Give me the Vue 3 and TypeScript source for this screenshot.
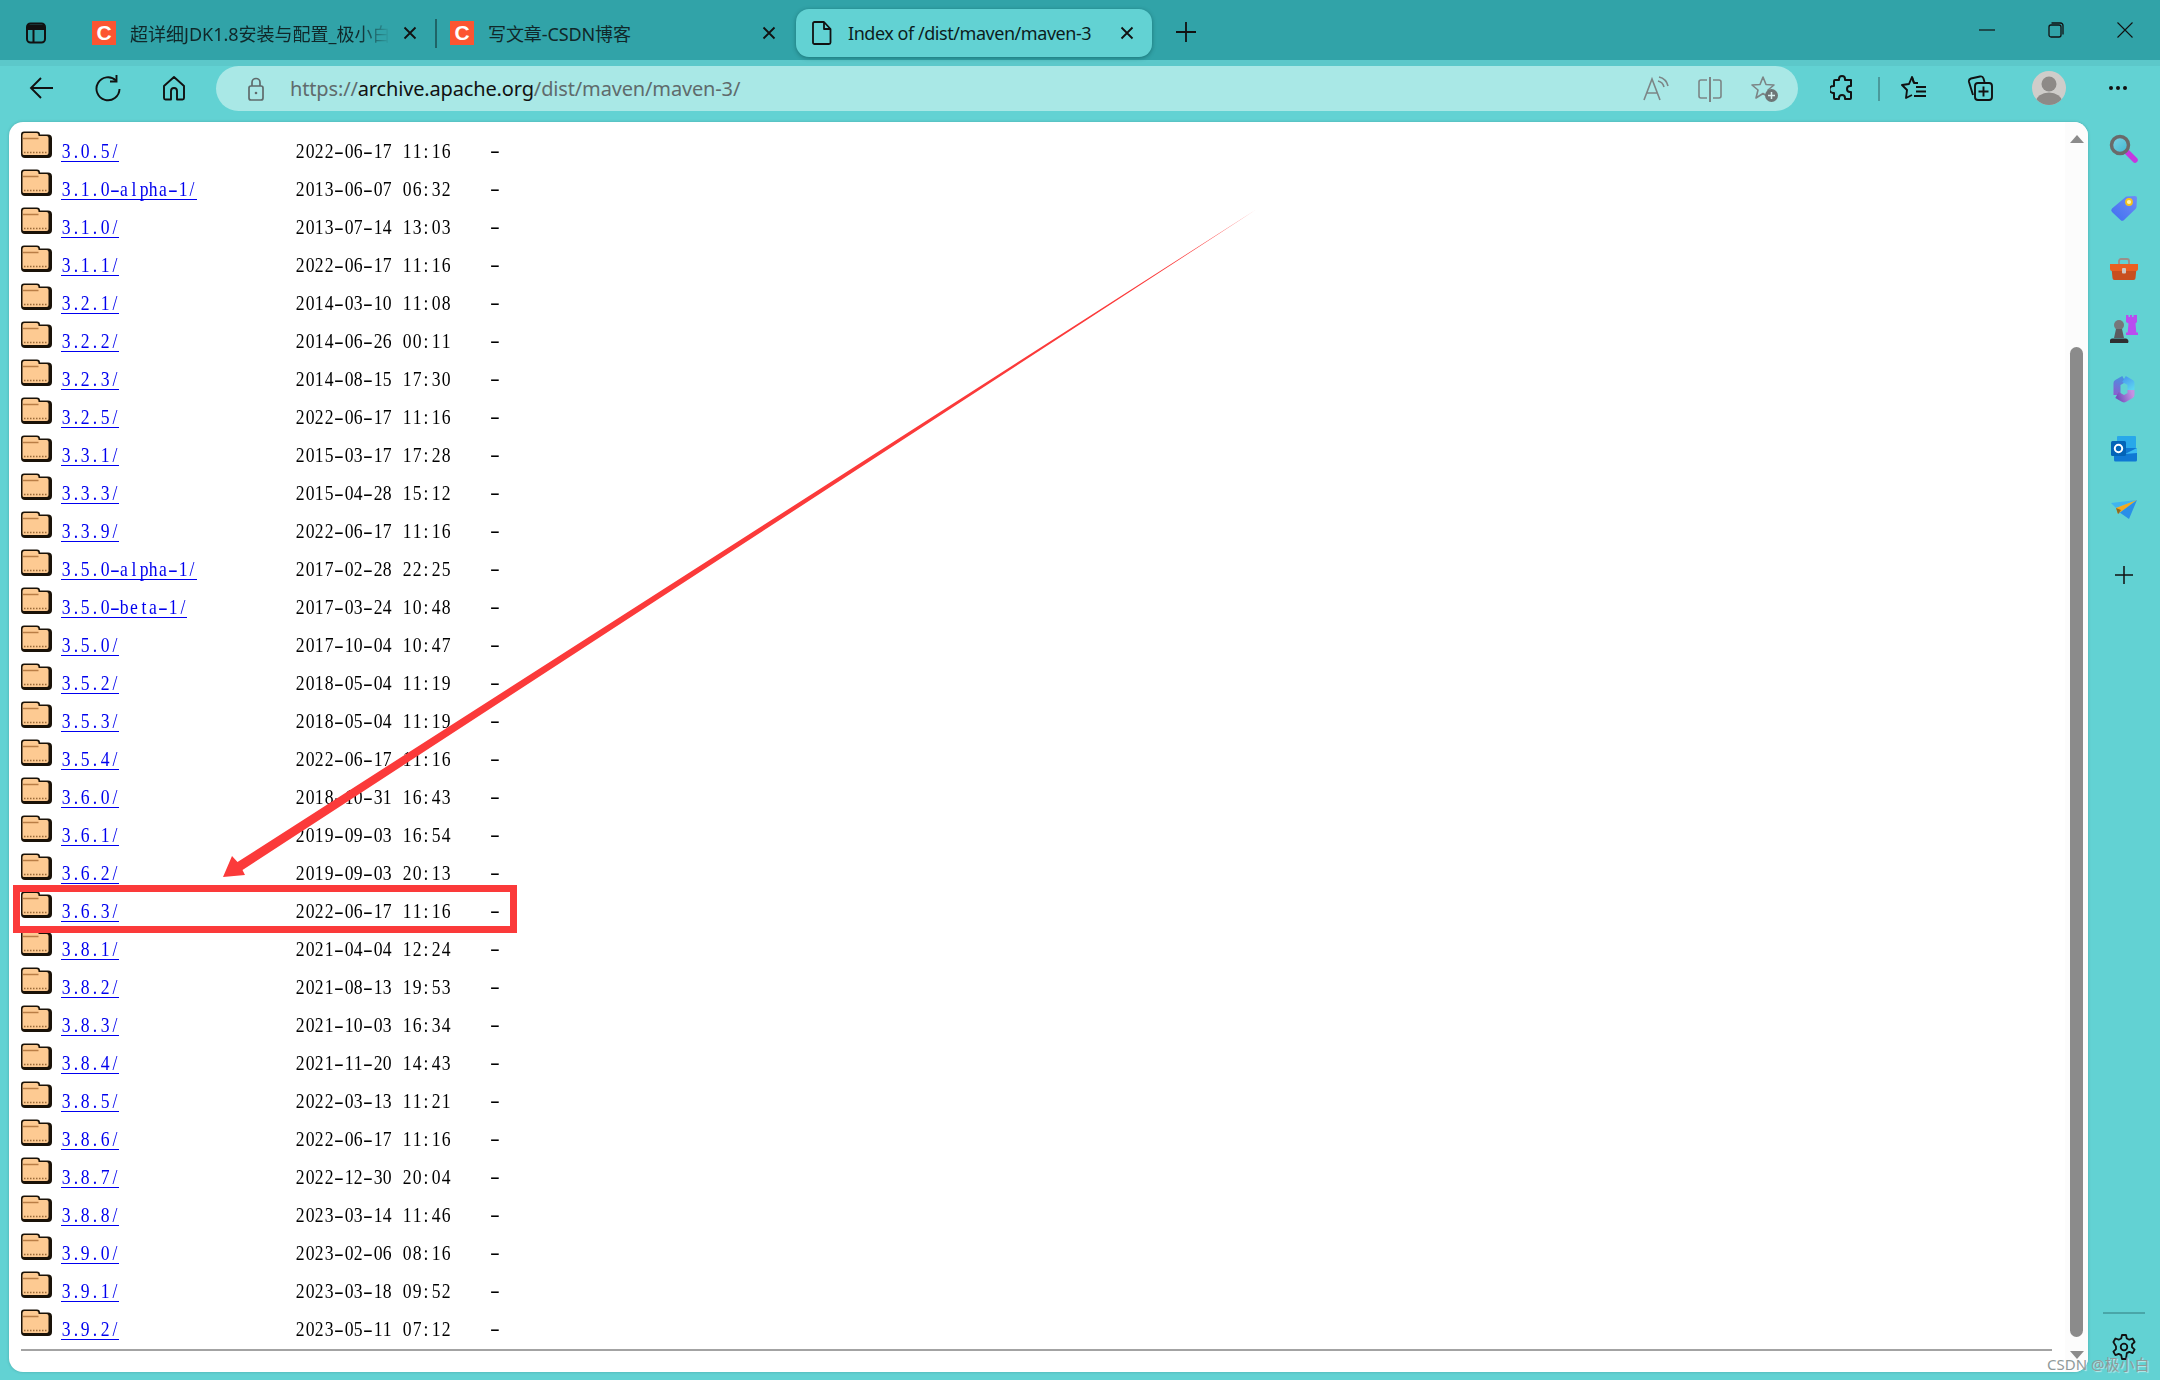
<template>
  <div class="browser">
    <!-- tab strip -->
    <header class="tabstrip">
      <button class="strip-btn">
        <svg width="24" height="24" viewBox="0 0 24 24" fill="none" stroke="#111" stroke-width="2">
          <rect x="3" y="2.5" width="18" height="19" rx="3.5" />
          <path d="M3 8h18M9.500 8v13.500" />
          <path d="M4 3.500h16v4.500H4z" fill="#111" stroke="none" />
        </svg>
      </button>
      <div class="tab tab-first">
        <span class="favicon">C</span>
        <span class="tab-title fade">超详细JDK1.8安装与配置_极小白</span>
        <svg class="tab-x" width="16" height="16" viewBox="0 0 16 16"><path d="M2.500 2.500l11 11M13.500 2.500l-11 11" stroke="#111" stroke-width="1.800" /></svg>
      </div>
      <span class="tab-sep"></span>
      <div class="tab tab-second">
        <span class="favicon">C</span>
        <span class="tab-title">写文章-CSDN博客</span>
        <svg class="tab-x" width="16" height="16" viewBox="0 0 16 16"><path d="M2.500 2.500l11 11M13.500 2.500l-11 11" stroke="#111" stroke-width="1.800" /></svg>
      </div>
      <div class="tab tab-active">
        <svg class="file-icon" width="20" height="24" viewBox="0 0 20 24" fill="none" stroke="#111" stroke-width="1.800" stroke-linejoin="round">
          <path d="M2.500 1h9.500l6.500 7v13.500a1.500 1.500 0 0 1-1.500 1.500H2.500A1.500 1.500 0 0 1 1 21.500v-19A1.500 1.500 0 0 1 2.500 1z" />
          <path d="M12 1v7h6.500" />
        </svg>
        <span class="tab-title">Index of /dist/maven/maven-3</span>
        <svg class="tab-x" width="16" height="16" viewBox="0 0 16 16"><path d="M2.500 2.500l11 11M13.500 2.500l-11 11" stroke="#111" stroke-width="1.800" /></svg>
      </div>
      <button class="strip-btn new-tab">
        <svg width="24" height="24" viewBox="0 0 24 24"><path d="M12 2v20M2 12h20" stroke="#111" stroke-width="1.800" /></svg>
      </button>
      <div class="win-controls">
        <svg width="16" height="16" viewBox="0 0 16 16"><path d="M0 8h16" stroke="#111" stroke-width="1.200" /></svg>
        <svg width="16" height="16" viewBox="0 0 16 16" fill="none" stroke="#111" stroke-width="1.300">
          <rect x="1" y="3" width="12" height="12" rx="2" />
          <path d="M3.500 1h9a2.500 2.500 0 0 1 2.500 2.500v9" />
        </svg>
        <svg width="16" height="16" viewBox="0 0 16 16"><path d="M0.500 0.500l15 15M15.500 0.500l-15 15" stroke="#111" stroke-width="1.100" /></svg>
      </div>
    </header>

    <!-- toolbar -->
    <nav class="toolbar">
      <button class="tool">
        <svg width="26" height="26" viewBox="0 0 26 26" fill="none" stroke="#111" stroke-width="1.900"><path d="M24 13H2M12 3L2 13l10 10" /></svg>
      </button>
      <button class="tool">
        <svg width="26" height="28" viewBox="0 0 26 28" fill="none" stroke="#111" stroke-width="1.900"><path d="M21 6.500A11.500 11.500 0 1 0 24.500 15" /><path d="M21.500 1v6.500H15" /></svg>
      </button>
      <button class="tool">
        <svg width="24" height="26" viewBox="0 0 24 26" fill="none" stroke="#111" stroke-width="1.900" stroke-linejoin="round"><path d="M12 2L2 11v12a1.500 1.500 0 0 0 1.500 1.500H9V16a3 3 0 0 1 6 0v8.500h5.500A1.500 1.500 0 0 0 22 23V11z" /></svg>
      </button>
      <div class="addressbar">
        <svg class="lock" width="16" height="24" viewBox="0 0 16 24" fill="none" stroke="#5f6b6c" stroke-width="1.700">
          <rect x="1" y="9" width="14" height="14" rx="2" />
          <path d="M4 9V5.500a4 4 0 0 1 8 0V9" />
          <circle cx="8" cy="16" r="1.300" fill="#5f6b6c" stroke="none" />
        </svg>
        <span class="url"><span class="url-dim">https://</span>archive.apache.org<span class="url-dim">/dist/maven/maven-3/</span></span>
        <div class="addr-icons">
          <svg width="26" height="26" viewBox="0 0 26 26" fill="none" stroke="#7c8586" stroke-width="1.600">
            <path d="M1 24L9 3l8 21M4 17h10" />
            <path d="M15 5a8 8 0 0 1 6 6M16 1a12 12 0 0 1 9 9" />
          </svg>
          <svg width="26" height="26" viewBox="0 0 26 26" fill="none" stroke="#7c8586" stroke-width="1.600">
            <path d="M10 4H4a2 2 0 0 0-2 2v14a2 2 0 0 0 2 2h6M16 4h6a2 2 0 0 1 2 2v14a2 2 0 0 1-2 2h-6" />
            <path d="M13 1v25" stroke-width="2" />
          </svg>
          <svg width="28" height="28" viewBox="0 0 28 28" fill="none" stroke="#7c8586" stroke-width="1.600" stroke-linejoin="round">
            <path d="M12 2l3 7.500 8 .5-6 5 2 8-7-4.500L5 23l2-8-6-5 8-.5z" />
            <circle cx="20.500" cy="20.500" r="6.500" fill="#6d7576" stroke="none" />
            <path d="M20.500 17v7M17 20.500h7" stroke="#d8f0ef" stroke-width="1.500" />
          </svg>
        </div>
      </div>
      <button class="tool tool-ext">
        <svg width="24" height="26" viewBox="0 0 24 26" fill="none" stroke="#111" stroke-width="2" stroke-linejoin="round">
          <path d="M9 5V4a3 3 0 0 1 6 0v1h6v6h-1a3 3 0 0 0 0 6h1v6a1 1 0 0 1-1 1h-5v-1a3 3 0 0 0-6 0v1H5a1 1 0 0 1-1-1v-5H3a3.500 3.500 0 0 1 0-7h1V6a1 1 0 0 1 1-1z" />
        </svg>
      </button>
      <span class="tool-sep"></span>
      <button class="tool tool-fav">
        <svg width="26" height="26" viewBox="0 0 26 26" fill="none" stroke="#111" stroke-width="1.900" stroke-linejoin="round">
          <path d="M13 8l-2-6-3 7-7 1 5 5-1 8 6-3" />
          <path d="M11 2l2 6h4M15 12h10M15 16.500h10M13 21h12" />
        </svg>
      </button>
      <button class="tool">
        <svg width="26" height="26" viewBox="0 0 26 26" fill="none" stroke="#111" stroke-width="1.900" stroke-linejoin="round">
          <path d="M6 20L2 7a3 3 0 0 1 2-3.500L13 1.500a3 3 0 0 1 3.500 2L17.500 7" />
          <rect x="8" y="8" width="17" height="17" rx="3" />
          <path d="M16.500 11.500v10M11.500 16.500h10" />
        </svg>
      </button>
      <button class="tool tool-avatar">
        <svg width="34" height="34" viewBox="0 0 34 34">
          <defs><clipPath id="avatar-clip"><circle cx="17" cy="17" r="17" /></clipPath></defs>
          <circle cx="17" cy="17" r="17" fill="#cfcdca" />
          <g clip-path="url(#avatar-clip)" fill="#8d8a87">
            <circle cx="17" cy="13" r="7.500" />
            <ellipse cx="17" cy="31" rx="13" ry="9.500" />
          </g>
        </svg>
      </button>
      <button class="tool tool-more">
        <svg width="20" height="6" viewBox="0 0 20 6" fill="#111">
          <circle cx="3" cy="3" r="2" /><circle cx="10" cy="3" r="2" /><circle cx="17" cy="3" r="2" />
        </svg>
      </button>
    </nav>

    <div class="main">
      <section class="content">
        <div class="listing">
          <div v-for="row in rows" :key="row.name" class="row">
            <svg class="folder" width="31" height="27" viewBox="0 0 31 27">
              <path d="M3 0.500h13a3 3 0 0 1 3 3h8a4 4 0 0 1 4 4V23a4 4 0 0 1-4 4H4a4 4 0 0 1-4-4V3.500a3 3 0 0 1 3-3z" fill="#1a1208" />
              <path d="M3.500 2h12a2 2 0 0 1 2 2v1h8a2 2 0 0 1 2 2V22a2 2 0 0 1-2 2H3a1.500 1.500 0 0 1-1.500-1.500V4a2 2 0 0 1 2-2z" fill="#fdca92" />
              <path d="M2 7.500h15.500" stroke="#b97d45" stroke-width="1.500" />
              <path d="M3 21.500h23" stroke="#9a6a38" stroke-width="1.500" stroke-dasharray="1.500 1.500" />
            </svg>
            <a class="name"><span v-for="(c, i) in chars(row.name)" :key="i" :class="['ch', { dash: c === '-' }]">{{ c }}</span></a>
            <span class="date"><span v-for="(c, i) in chars(row.date)" :key="i" :class="['ch', { dash: c === '-' }]">{{ c }}</span></span>
            <span class="size"><span class="ch dash">-</span></span>
          </div>
        </div>
        <div class="scroll-v">
          <i class="arrow-up"></i>
          <i class="thumb"></i>
          <i class="arrow-down"></i>
        </div>
        <div class="scroll-h"></div>
      </section>

      <aside class="sidebar">
        <div class="side-icon">
          <svg width="30" height="30" viewBox="0 0 30 30">
            <defs><linearGradient id="lens" x1="0" y1="0" x2="1" y2="1"><stop offset="0" stop-color="#7fd4e6" /><stop offset="1" stop-color="#3fb6d0" /></linearGradient></defs>
            <path d="M18 18l8 8" stroke="#c438e0" stroke-width="5.500" stroke-linecap="round" />
            <circle cx="11" cy="11" r="8.500" fill="url(#lens)" stroke="#6a6a6a" stroke-width="3.500" />
          </svg>
        </div>
        <div class="side-icon">
          <svg width="28" height="28" viewBox="0 0 28 28">
            <defs><linearGradient id="tag" x1="0" y1="1" x2="1" y2="0"><stop offset="0" stop-color="#3f6ff0" /><stop offset="1" stop-color="#6f8cf7" /></linearGradient></defs>
            <path d="M15 2.500a3 3 0 0 1 2-1l8-.5a2 2 0 0 1 2 2l-.5 9a3 3 0 0 1-1 2L14 25a2.500 2.500 0 0 1-3.500 0L2 17a2.500 2.500 0 0 1 0-3.500z" fill="url(#tag)" />
            <circle cx="19" cy="7" r="3" fill="#fff3b0" stroke="#f5c21b" stroke-width="1.800" />
          </svg>
        </div>
        <div class="side-icon">
          <svg width="28" height="22" viewBox="0 0 28 22">
            <path d="M9 6V3a2 2 0 0 1 2-2h6a2 2 0 0 1 2 2v3" fill="none" stroke="#9a8f8a" stroke-width="1.800" />
            <path d="M1.500 10h25l-1 10a2 2 0 0 1-2 2h-19a2 2 0 0 1-2-2z" fill="#c94f1e" />
            <path d="M0 6h28v5a2 2 0 0 1-2 2H2a2 2 0 0 1-2-2z" fill="#ea5f21" />
            <rect x="12" y="10" width="4" height="5.500" rx="1" fill="#cfc7c2" />
          </svg>
        </div>
        <div class="side-icon">
          <svg width="28" height="30" viewBox="0 0 28 30">
            <path d="M16 1h2.500v2H20V1h2v2h1.500V1H27v7l-1.500 1.500.8 9H28V21H16v-2.500h1.700l.8-9L16 8z" fill="#b94df0" />
            <circle cx="9" cy="11" r="5" fill="#77777a" />
            <path d="M6 15h6l2 9H4z" fill="#5c5c5f" />
            <path d="M0 29a3 3 0 0 1 3-4.500h12a3 3 0 0 1 3 4.500z" fill="#2f2f31" />
          </svg>
        </div>
        <div class="side-icon">
          <svg width="26" height="28" viewBox="0 0 26 28" fill="none" stroke-width="7" stroke-linejoin="round">
            <defs>
              <linearGradient id="of1" gradientUnits="userSpaceOnUse" x1="6" y1="20" x2="13" y2="4"><stop offset="0" stop-color="#8a5fd0" /><stop offset="1" stop-color="#4a90e0" /></linearGradient>
              <linearGradient id="of2" gradientUnits="userSpaceOnUse" x1="13" y1="4" x2="20" y2="15"><stop offset="0" stop-color="#4a9ff0" /><stop offset="1" stop-color="#5cd4f0" /></linearGradient>
              <linearGradient id="of3" gradientUnits="userSpaceOnUse" x1="6" y1="20" x2="20" y2="15"><stop offset="0" stop-color="#7450bd" /><stop offset="1" stop-color="#c592e2" /></linearGradient>
            </defs>
            <path d="M6 20V8l7-4" stroke="url(#of1)" />
            <path d="M13 4l7 4v7" stroke="url(#of2)" />
            <path d="M6 20l7 4 7-4v-5" stroke="url(#of3)" />
          </svg>
        </div>
        <div class="side-icon">
          <svg width="26" height="26" viewBox="0 0 26 26">
            <rect x="6" y="0" width="19" height="14" rx="1" fill="#28a8ea" />
            <path d="M3 12h23v12a1.500 1.500 0 0 1-1.500 1.500h-20A1.500 1.500 0 0 1 3 24z" fill="#0f78d4" />
            <path d="M14 18l12-6v5z" fill="#50d9ff" opacity=".7" />
            <rect x="0" y="5" width="15" height="15" rx="1.500" fill="#0364b8" />
            <circle cx="7.500" cy="12.500" r="3.700" fill="none" stroke="#fff" stroke-width="2" />
          </svg>
        </div>
        <div class="side-icon">
          <svg width="26" height="20" viewBox="0 0 26 20">
            <path d="M0 4L26 1 5 9z" fill="#3fb4f0" />
            <path d="M26 1L5 9l2 6z" fill="#f4a91f" />
            <path d="M26 1L7 15l1-2 10 7z" fill="#2a8fe8" />
            <path d="M5 9l2 6 3-4z" fill="#8c6a20" />
          </svg>
        </div>
        <div class="side-icon side-add">
          <svg width="18" height="18" viewBox="0 0 18 18"><path d="M9 0v18M0 9h18" stroke="#111" stroke-width="1.500" /></svg>
        </div>
        <div class="side-bottom">
          <span class="side-sep"></span>
          <svg width="24" height="26" viewBox="0 0 24 26" fill="none" stroke="#111" stroke-width="1.800" stroke-linejoin="round">
            <path d="M10 1h4l.8 3.500 2.500 1.200 3.300-1.200 2 3.500-2.600 2.400v2.800l2.600 2.400-2 3.500-3.300-1.200-2.500 1.200L14 25h-4l-.8-3.900-2.500-1.200-3.300 1.200-2-3.500 2.600-2.400v-2.800L1.400 8l2-3.500 3.300 1.200 2.500-1.200z" />
            <circle cx="12" cy="13" r="3.300" />
          </svg>
        </div>
      </aside>
    </div>

    <!-- annotation drawn on top of the screenshot -->
    <svg class="arrow" width="2160" height="1380" viewBox="0 0 2160 1380">
      <polygon points="1257,209 242.500,870 245,875 223,877 232,856 237.500,862" fill="#fb3a3a" />
    </svg>
    <div class="highlight"></div>
    <span class="watermark">CSDN @极小白</span>
  </div>
</template>

<script setup lang="ts">
interface Row {
  name: string
  date: string
}

const rows: Row[] = [
  { name: '3.0.5/', date: '2022-06-17 11:16' },
  { name: '3.1.0-alpha-1/', date: '2013-06-07 06:32' },
  { name: '3.1.0/', date: '2013-07-14 13:03' },
  { name: '3.1.1/', date: '2022-06-17 11:16' },
  { name: '3.2.1/', date: '2014-03-10 11:08' },
  { name: '3.2.2/', date: '2014-06-26 00:11' },
  { name: '3.2.3/', date: '2014-08-15 17:30' },
  { name: '3.2.5/', date: '2022-06-17 11:16' },
  { name: '3.3.1/', date: '2015-03-17 17:28' },
  { name: '3.3.3/', date: '2015-04-28 15:12' },
  { name: '3.3.9/', date: '2022-06-17 11:16' },
  { name: '3.5.0-alpha-1/', date: '2017-02-28 22:25' },
  { name: '3.5.0-beta-1/', date: '2017-03-24 10:48' },
  { name: '3.5.0/', date: '2017-10-04 10:47' },
  { name: '3.5.2/', date: '2018-05-04 11:19' },
  { name: '3.5.3/', date: '2018-05-04 11:19' },
  { name: '3.5.4/', date: '2022-06-17 11:16' },
  { name: '3.6.0/', date: '2018-10-31 16:43' },
  { name: '3.6.1/', date: '2019-09-03 16:54' },
  { name: '3.6.2/', date: '2019-09-03 20:13' },
  { name: '3.6.3/', date: '2022-06-17 11:16' },
  { name: '3.8.1/', date: '2021-04-04 12:24' },
  { name: '3.8.2/', date: '2021-08-13 19:53' },
  { name: '3.8.3/', date: '2021-10-03 16:34' },
  { name: '3.8.4/', date: '2021-11-20 14:43' },
  { name: '3.8.5/', date: '2022-03-13 11:21' },
  { name: '3.8.6/', date: '2022-06-17 11:16' },
  { name: '3.8.7/', date: '2022-12-30 20:04' },
  { name: '3.8.8/', date: '2023-03-14 11:46' },
  { name: '3.9.0/', date: '2023-02-06 08:16' },
  { name: '3.9.1/', date: '2023-03-18 09:52' },
  { name: '3.9.2/', date: '2023-05-11 07:12' },
]

function chars(text: string): string[] {
  return text.split('')
}
</script>

<style>
html,
body {
  margin: 0;
  background: #62d2d3;
  overflow: hidden;
}
</style>

<style scoped>
.browser {
  position: relative;
  width: 2160px;
  height: 1380px;
  display: flex;
  flex-direction: column;
  background: #62d2d3;
  overflow: hidden;
  font-family: "Noto Sans", "Noto Sans CJK SC", sans-serif;
  color: #111;
}
button {
  border: 0;
  background: none;
  padding: 0;
  display: flex;
  align-items: center;
  justify-content: center;
}

/* tab strip */
.tabstrip {
  height: 60px;
  flex: none;
  display: flex;
  align-items: center;
  box-sizing: border-box;
  padding-top: 6px;
  background: #31a3a8;
  box-shadow: 0 6px 0 #5cc8ca;
}
.strip-btn {
  width: 24px;
  height: 24px;
  margin: 0 0 0 24px;
}
.tab {
  display: flex;
  align-items: center;
  height: 48px;
  flex: none;
  font-size: 18px;
  white-space: nowrap;
}
.tab-first {
  width: 326px;
  margin-left: 44px;
}
.favicon {
  width: 24px;
  height: 24px;
  flex: none;
  background: #fc5531;
  color: #fff;
  font: 700 21px/24px "Liberation Sans", sans-serif;
  text-align: center;
}
.tab-title {
  margin-left: 14px;
  letter-spacing: -0.1px;
  color: #10282a;
}
.fade {
  width: 260px;
  overflow: hidden;
  letter-spacing: 0;
  -webkit-mask-image: linear-gradient(to right, #000 88%, transparent);
  mask-image: linear-gradient(to right, #000 88%, transparent);
}
.tab-x {
  flex: none;
  margin-left: 12px;
}
.tab-sep {
  width: 2px;
  height: 29px;
  margin-left: 17px;
  flex: none;
  background: #1f6467;
}
.tab-second {
  width: 327px;
  margin-left: 13px;
}
.tab-second .tab-title {
  width: 261px;
}
.tab-active {
  width: 356px;
  margin-left: 19px;
  background: #62d2d3;
  border-radius: 13px;
  box-shadow: 0 1px 4px rgba(0, 60, 60, 0.45);
  box-sizing: border-box;
  padding-left: 16px;
}
.tab-active .tab-title {
  width: 260px;
  margin-left: 16px;
  letter-spacing: -0.45px;
  color: #0c1d1e;
}
.tab-active .tab-x {
  margin-left: 11px;
}
.new-tab {
  margin-left: 22px;
  margin-top: -2px;
}
.win-controls {
  margin-left: auto;
  margin-right: 27px;
  margin-top: -6px;
  display: flex;
  gap: 53px;
}

/* toolbar */
.toolbar {
  position: relative;
  height: 62px;
  flex: none;
  display: flex;
  align-items: flex-start;
  padding-left: 9px;
}
.tool {
  width: 66px;
  height: 56px;
  flex: none;
}
.addressbar {
  width: 1582px;
  height: 45px;
  margin: 6px 0 0 9px;
  flex: none;
  display: flex;
  align-items: center;
  background: #a9e8e6;
  border-radius: 23px;
  box-sizing: border-box;
  padding-left: 32px;
}
.lock {
  flex: none;
}
.url {
  margin-left: 26px;
  font-size: 20px;
  letter-spacing: -0.15px;
  color: #111;
}
.url-dim {
  color: #5f6b6c;
}
.addr-icons {
  margin-left: auto;
  margin-right: 19px;
  display: flex;
  align-items: center;
  gap: 28px;
}
.tool-ext {
  margin-left: 11px;
}
.tool-sep {
  width: 2px;
  height: 24px;
  margin: 17px 1px 0 3px;
  background: #4a9a9c;
  flex: none;
}
.tool-avatar,
.tool-more {
  margin-left: 3px;
}

/* page area */
.main {
  flex: 1;
  min-height: 0;
  display: flex;
  padding: 0 0 8px 9px;
}
.content {
  position: relative;
  width: 2079px;
  flex: none;
  background: #fff;
  border-radius: 14px;
  box-shadow: 0 0 3px rgba(0, 60, 60, 0.25);
  overflow: hidden;
}
.listing {
  padding: 12px 0 0 12px;
  font-family: "Liberation Serif", "Noto Sans CJK SC", serif;
  font-size: 21px;
  color: #000;
}
.row {
  display: grid;
  grid-template-columns: 40px 234px 195px auto;
  height: 38px;
  align-items: start;
}
.folder {
  margin-top: -3px;
}
.name {
  display: inline-flex;
  justify-self: start;
  color: #0000ee;
  line-height: 20px;
  padding-top: 8px;
  border-bottom: 1.5px solid #0000ee;
  margin-top: -1px;
}
.date {
  display: inline-flex;
  line-height: 20px;
  padding-top: 7px;
}
.size {
  display: inline-flex;
  line-height: 20px;
  padding-top: 6px;
}
.ch {
  width: 9.72px;
  display: inline-block;
  text-align: center;
  white-space: pre;
  transform: scaleX(0.84);
}
.ch.dash {
  transform: scaleX(1.4);
}
.scroll-v {
  position: absolute;
  top: 0;
  right: 0;
  bottom: 0;
  width: 23px;
  background: #fcfcfc;
  display: flex;
  flex-direction: column;
  align-items: center;
}
.arrow-up {
  margin-top: 13px;
  border: 7px solid transparent;
  border-top: 0;
  border-bottom: 8px solid #8b8b8b;
}
.thumb {
  width: 13px;
  height: 990px;
  margin-top: 204px;
  border-radius: 7px;
  background: #8b8b8b;
}
.arrow-down {
  margin-top: 14px;
  border: 7px solid transparent;
  border-bottom: 0;
  border-top: 8px solid #8b8b8b;
}
.scroll-h {
  position: absolute;
  left: 12px;
  right: 36px;
  bottom: 21px;
  height: 2px;
  background: #a3a3a3;
}

/* right rail */
.sidebar {
  width: 72px;
  flex: none;
  display: flex;
  flex-direction: column;
  align-items: center;
  margin-top: -3px;
}
.side-icon {
  width: 60px;
  height: 60px;
  flex: none;
  display: flex;
  align-items: center;
  justify-content: center;
}
.side-add {
  margin-top: 6px;
}
.side-bottom {
  margin-top: auto;
  padding-bottom: 12px;
  display: flex;
  flex-direction: column;
  align-items: center;
  gap: 20px;
}
.side-sep {
  width: 42px;
  height: 2px;
  background: #49a6a8;
}

/* annotation */
.arrow {
  position: absolute;
  top: 0;
  left: 0;
  pointer-events: none;
}
.highlight {
  position: absolute;
  left: 13px;
  top: 885px;
  width: 504px;
  height: 48px;
  box-sizing: border-box;
  border: 7px solid #fb3a3a;
}
.watermark {
  position: absolute;
  left: 2047px;
  top: 1353px;
  font-size: 15px;
  color: #8f9a9a;
  text-shadow: 1px 1px 1px rgba(255, 255, 255, 0.6);
  white-space: nowrap;
}
</style>
